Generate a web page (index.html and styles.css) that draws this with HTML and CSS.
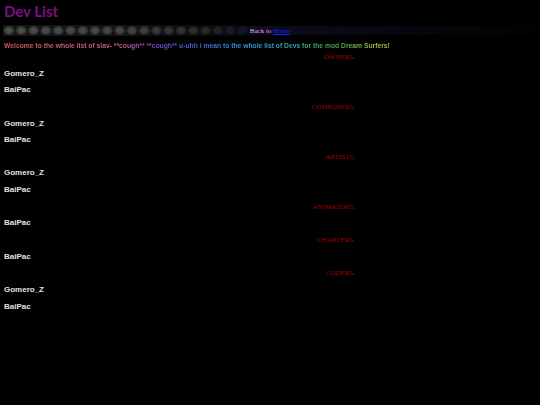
FILE: index.html
```html
<!DOCTYPE html>
<html>
<head>
<meta charset="utf-8">
<link rel="stylesheet" href="styles.css">
</head>
<body>
<h1 class="title">Dev List</h1>
<div class="bar">
  <span class="back">Back to <a href="#" class="home">Home</a></span>
</div>
<p class="welcome">Welcome to the whole list of slav- **cough** **cough** u-uhh i mean to the whole list of Devs for the mod Dream Surfers!</p>
<div class="list">
  <div class="role">OWNERS.</div>
  <div class="name">Gomero_Z</div>
  <div class="name">BaiPac</div>
  <div class="role">COMPOSERS.</div>
  <div class="name">Gomero_Z</div>
  <div class="name">BaiPac</div>
  <div class="role">ARTISTS.</div>
  <div class="name">Gomero_Z</div>
  <div class="name">BaiPac</div>
  <div class="role">ANIMATORS.</div>
  <div class="name">BaiPac</div>
  <div class="role">CHARTERS.</div>
  <div class="name">BaiPac</div>
  <div class="role">CODERS.</div>
  <div class="name">Gomero_Z</div>
  <div class="name">BaiPac</div>
</div>
</body>
</html>
```
FILE: styles.css
```css
html, body {
  background: #000;
}
body {
  margin: 0;
  padding: 4px 0 0 0;
  font-family: "Liberation Sans", Arial, sans-serif;
}
.title {
  margin: 0 0 0 4px;
  font-family: Lato, "Noto Sans", sans-serif;
  font-weight: 700;
  font-size: 15px;
  line-height: 15px;
  color: #7d0f86;
}
.bar {
  margin: 6px 0 0 3px;
  height: 11px;
  position: relative;
  display: flex;
  justify-content: center;
  align-items: center;
  padding-right: 3px;
}
.bar::before {
  content: "";
  position: absolute;
  left: 0;
  top: 0;
  right: 0;
  bottom: 0;
  background-image: radial-gradient(ellipse 6px 5px at 6px 5.5px, #525252 0, #444 60%, #151515 100%);
  background-size: 12.3px 11px;
  background-repeat: repeat-x;
  -webkit-mask-image: linear-gradient(to right, #000 0, rgba(0,0,0,0.9) 120px, rgba(0,0,0,0.5) 210px, rgba(0,0,0,0.1) 265px, rgba(0,0,0,0.03) 400px, rgba(0,0,0,0) 537px);
  mask-image: linear-gradient(to right, #000 0, rgba(0,0,0,0.9) 120px, rgba(0,0,0,0.5) 210px, rgba(0,0,0,0.1) 265px, rgba(0,0,0,0.03) 400px, rgba(0,0,0,0) 537px);
}
.bar::after {
  content: "";
  position: absolute;
  left: 200px;
  top: 1px;
  right: 0;
  bottom: 1px;
  background: linear-gradient(to right, rgba(20,20,60,0) 0, rgba(20,20,60,0.45) 60px, rgba(20,20,50,0.25) 200px, rgba(15,15,40,0.12) 337px);
}
.back {
  position: relative;
  z-index: 1;
  font-family: "Liberation Serif", "Times New Roman", serif;
  font-size: 7px;
  color: #e6a2ec;
}
.home {
  color: #1a1aff;
}
.welcome {
  margin: 5px 0 0 4px;
  width: fit-content;
  font-size: 6.75px;
  line-height: 9px;
  font-weight: 700;
  background: linear-gradient(to right, #d45e5a 0, #c46088 115px, #8a46c4 145px, #5a4ed0 170px, #3a70d4 200px, #32a0d6 250px, #2eaaa4 290px, #4aa64e 330px, #a6c43c 375px);
  -webkit-background-clip: text;
  background-clip: text;
  color: transparent;
}
.list {
  width: 355px;
  margin-top: -1px;
}
.role {
  text-align: right;
  font-family: "Liberation Serif", "Times New Roman", serif;
  font-size: 7px;
  line-height: 16.65px;
  height: 16.65px;
  color: #a00000;
}
.name {
  margin-left: 4px;
  font-size: 8px;
  font-weight: 700;
  line-height: 16.65px;
  height: 16.65px;
  color: #e2e2e2;
}
```
